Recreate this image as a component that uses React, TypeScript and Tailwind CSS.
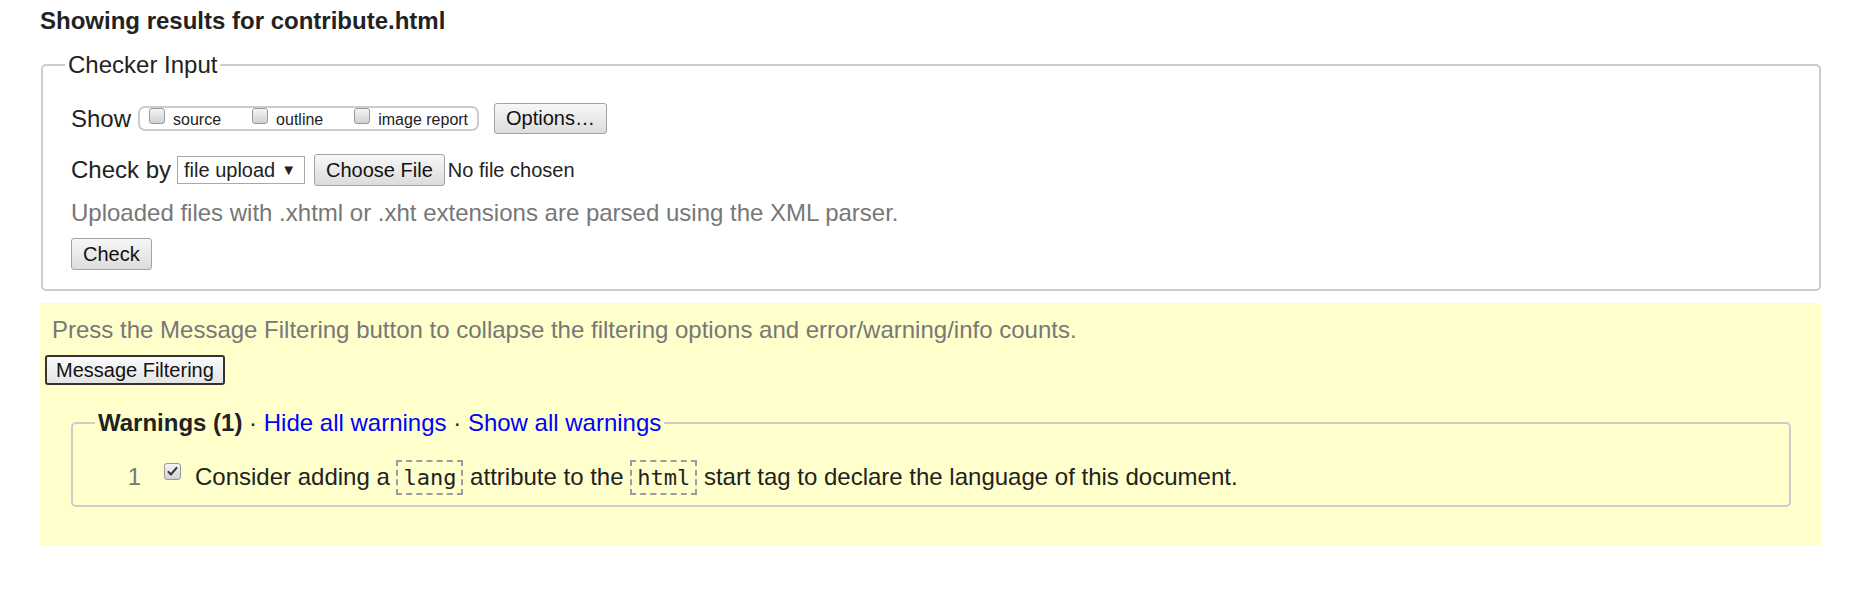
import clsx from "clsx";
import type { ReactNode } from "react";

function Checkbox({ checked, className }: { checked?: boolean; className?: string }) {
  return (
    <span
      className={clsx(
        "inline-flex shrink-0 items-center justify-center rounded-[3px] border border-[#9a9a9a] bg-linear-to-b from-[#f4f4f4] to-[#d2d2d2]",
        className
      )}
    >
      {checked && (
        <svg viewBox="0 0 16 16" className="h-[13px] w-[13px]">
          <path d="M3 8.5l3 3.2L13 3.5" fill="none" stroke="#333" strokeWidth="2.4" strokeLinecap="round" strokeLinejoin="round" />
        </svg>
      )}
    </span>
  );
}

function Btn({ children, className }: { children: ReactNode; className?: string }) {
  return (
    <button
      className={clsx(
        "rounded-[3px] border border-[#a3a3a3] bg-linear-to-b from-[#f7f7f7] to-[#dcdcdc] px-[11px] text-[20px] leading-[23px] text-[#111]",
        className
      )}
    >
      {children}
    </button>
  );
}

function Code({ children }: { children: ReactNode }) {
  return (
    <code className="border-2 border-dashed border-[#9c9c9c] px-[5px] py-[3px] font-['DejaVu_Sans_Mono',monospace] text-[22px] text-[#222]">
      {children}
    </code>
  );
}

export default function App() {
  const showOpts = ["source", "outline", "image report"];

  return (
    <div className="min-h-[591px] bg-white pl-10 pr-[33px] font-['Liberation_Sans',Arial,sans-serif] text-[#222]">
      <h2 className="pt-[7px] text-[24px] font-bold leading-[28px]">Showing results for contribute.html</h2>

      <fieldset className="ml-px mt-[16px] rounded-[5px] border-2 border-[#ccc] px-[22px] pb-[19px]">
        <legend className="px-[3px] text-[24px] leading-[28px]">Checker Input</legend>
        <div className="pl-[6px] pt-[24px]">
          <div className="flex h-[31px] items-center text-[24px]">
            <span>Show</span>
            <div className="ml-[7px] flex h-[25px] items-start gap-[31px] rounded-[7px] border-2 border-[#ccc] pl-[9px] pr-[9px]">
              {showOpts.map((o) => (
                <label key={o} className="flex items-start">
                  <Checkbox className="h-[16px] w-[16px]" />
                  <span className="ml-[8px] mt-[3px] text-[16px] leading-[18px]">{o}</span>
                </label>
              ))}
            </div>
            <Btn className="ml-[15px] h-[31px]">Options…</Btn>
          </div>

          <div className="mt-[20px] flex h-[32px] items-center text-[24px]">
            <span>Check by</span>
            <div className="ml-[6px] flex h-[28px] w-[128px] items-center justify-between border border-[#a9a9a9] bg-white pl-[6px] pr-[8px] text-[20px]">
              <span>file upload</span>
              <span className="text-[15px]">▼</span>
            </div>
            <Btn className="ml-[9px] h-[32px]">Choose File</Btn>
            <span className="ml-[3px] text-[20px]">No file chosen</span>
          </div>

          <p className="mt-[13px] text-[24px] leading-[28px] text-[#777]">
            Uploaded files with .xhtml or .xht extensions are parsed using the XML parser.
          </p>

          <Btn className="mt-[11px] h-[32px]">Check</Btn>
        </div>
      </fieldset>

      <div className="mt-[12px] bg-[#ffc] pb-[38px] pt-[13px]">
        <p className="pl-[12px] text-[24px] leading-[28px] text-[#777]">
          Press the Message Filtering button to collapse the filtering options and error/warning/info counts.
        </p>
        <button className="ml-[5px] mt-[11px] h-[30px] rounded-[3px] border-2 border-[#333] bg-linear-to-b from-[#fbfbfb] to-[#e4e4e4] px-[9px] text-[20px] leading-[23px] text-[#111]">
          Message Filtering
        </button>

        <fieldset className="ml-[31px] mr-[30px] mt-[24px] rounded-[5px] border-2 border-[#ccc] px-[22px] pb-[10px]">
          <legend className="px-[3px] text-[24px] leading-[28px]">
            <strong className="font-bold">Warnings (1)</strong>
            {" · "}
            <a className="text-[#00f]">Hide all warnings</a>
            {" · "}
            <a className="text-[#00f]">Show all warnings</a>
          </legend>
          <div className="pt-[22px]">
            <div className="flex h-[36px] items-center text-[24px] leading-[28px]">
              <span className="w-[46px] text-right text-[#777]">1</span>
              <Checkbox checked className="mb-[12px] ml-[23px] h-[17px] w-[17px]" />
              <span className="ml-[14px] whitespace-nowrap">
                Consider adding a <Code>lang</Code> attribute to the <Code>html</Code> start tag to declare the language of
                this document.
              </span>
            </div>
          </div>
        </fieldset>
      </div>
    </div>
  );
}
